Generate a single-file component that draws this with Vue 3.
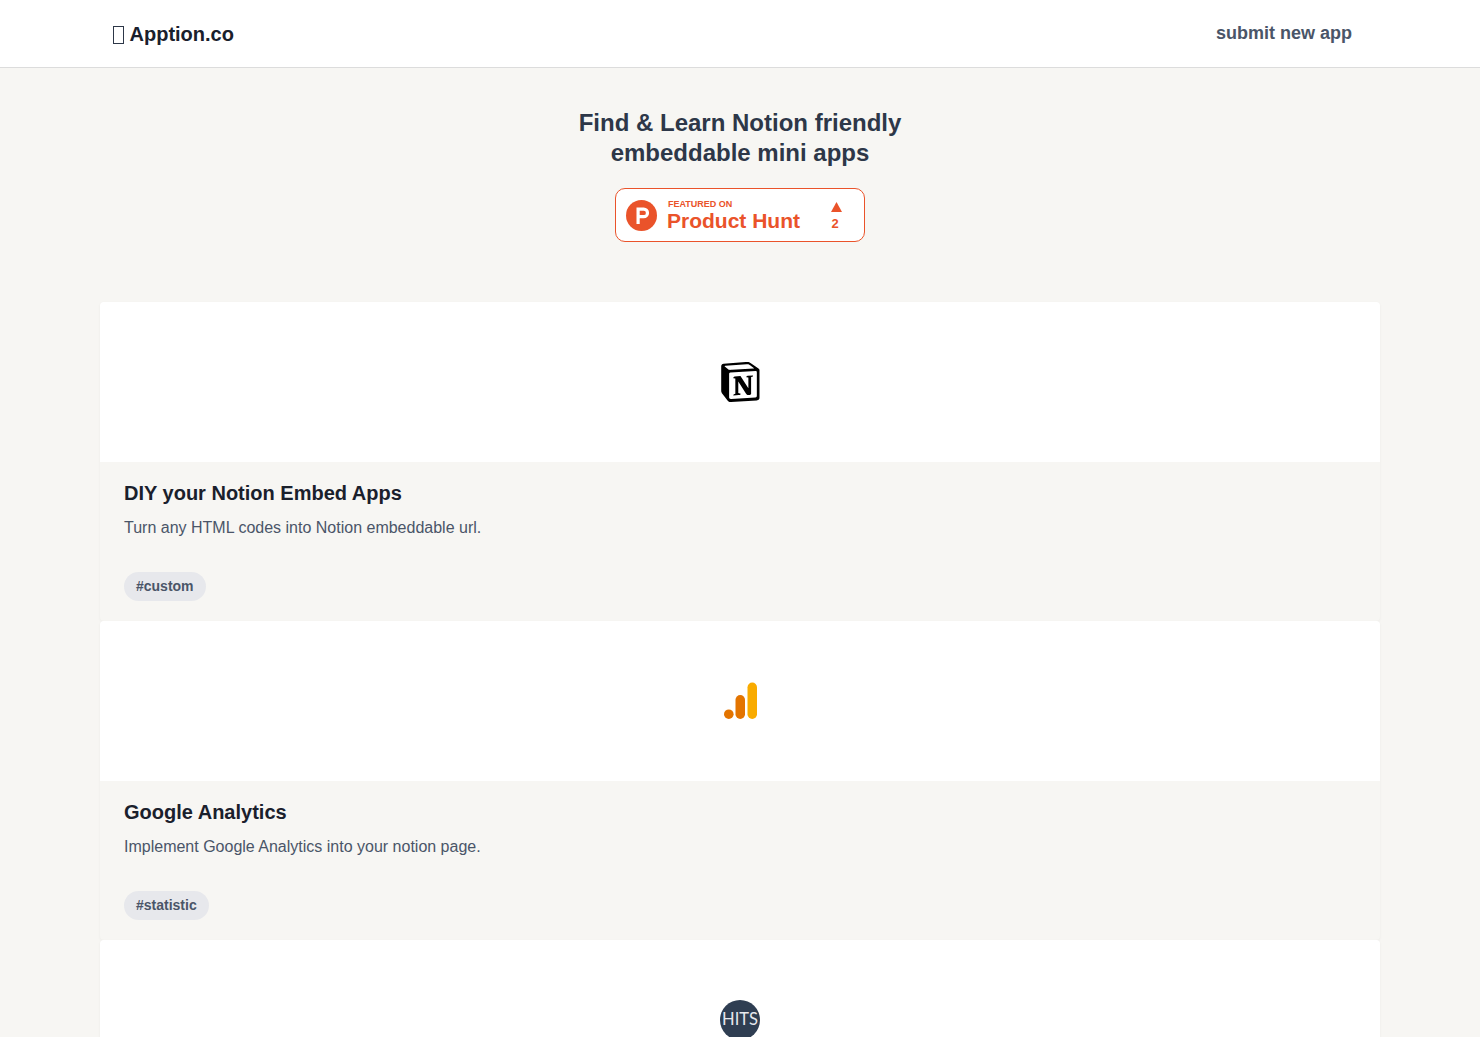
<script setup>
const apps = [
  { title: 'DIY your Notion Embed Apps', desc: 'Turn any HTML codes into Notion embeddable url.', tag: '#custom', icon: 'notion' },
  { title: 'Google Analytics', desc: 'Implement Google Analytics into your notion page.', tag: '#statistic', icon: 'ga' },
  { title: 'Hits', desc: 'Count the visitors of your notion page.', tag: '#statistic', icon: 'hits' },
]
</script>

<template>
  <div class="page">
    <header class="nav">
      <div class="nav-inner">
        <a class="brand"><span class="tofu"></span><span>Apption.co</span></a>
        <a class="submit">submit new app</a>
      </div>
    </header>
    <main class="main">
      <h1 class="hero">Find &amp; Learn Notion friendly<br />embeddable mini apps</h1>
      <div class="badge-wrap">
        <a class="badge">
          <span class="ph-logo">
            <svg width="31" height="31" viewBox="0 0 31 31">
              <circle cx="15.5" cy="15.5" r="15.5" fill="#ea532a" />
              <path fill="#fff" fill-rule="evenodd" d="M10.500 7.500h7.200a5.400 5.400 0 0 1 0 10.800H13.700V24h-3.200zM13.700 10.700v4.400h4a2.200 2.200 0 0 0 0-4.400z" />
            </svg>
          </span>
          <span class="ph-text">
            <span class="ph-small">FEATURED ON</span>
            <span class="ph-big">Product Hunt</span>
          </span>
          <span class="ph-vote">
            <svg width="11" height="10" viewBox="0 0 11 10"><path fill="#ea532a" d="M5.500 0L11 10H0z" /></svg>
            <span class="ph-num">2</span>
          </span>
        </a>
      </div>
      <section class="list">
        <article v-for="app in apps" :key="app.title" class="card">
          <div class="thumb">
            <svg v-if="app.icon === 'notion'" width="40" height="40" viewBox="-3 0 100 100">
              <path fill="#fff" d="M6.017 4.313l55.333 -4.087c6.797 -0.583 8.543 -0.19 12.817 2.917l17.663 12.443c2.913 2.14 3.883 2.723 3.883 5.053v68.243c0 4.277 -1.553 6.807 -6.99 7.193L24.467 99.967c-4.08 0.193 -6.023 -0.39 -8.16 -3.113L3.3 79.94c-2.333 -3.113 -3.3 -5.443 -3.3 -8.167V11.113c0 -3.497 1.553 -6.413 6.017 -6.8z" />
              <path fill="#000" fill-rule="evenodd" clip-rule="evenodd" d="M61.35 0.227l-55.333 4.087C1.553 4.7 0 7.617 0 11.113v60.66c0 2.723 0.967 5.053 3.3 8.167l13.007 16.913c2.137 2.723 4.08 3.307 8.16 3.113l64.257 -3.89c5.433 -0.387 6.99 -2.917 6.99 -7.193V20.64c0 -2.21 -0.873 -2.847 -3.443 -4.733L74.167 3.143c-4.273 -3.107 -6.02 -3.5 -12.817 -2.917zM25.92 19.523c-5.247 0.353 -6.437 0.433 -9.417 -1.99L8.927 11.507c-0.77 -0.78 -0.383 -1.753 1.557 -1.947l53.193 -3.887c4.467 -0.39 6.793 1.167 8.54 2.527l9.123 6.61c0.39 0.197 1.36 1.36 0.193 1.36l-54.933 3.307 -0.68 0.047zM19.803 88.3V30.367c0 -2.53 0.777 -3.697 3.103 -3.893L86 22.78c2.14 -0.193 3.107 1.167 3.107 3.693v57.547c0 2.53 -0.39 4.67 -3.883 4.863l-60.377 3.5c-3.493 0.193 -5.043 -0.97 -5.043 -4.083zm59.6 -54.827c0.387 1.75 0 3.5 -1.75 3.7l-2.91 0.577v42.773c-2.527 1.36 -4.853 2.137 -6.797 2.137 -3.107 0 -3.883 -0.973 -6.21 -3.887l-19.03 -29.94v28.967l6.02 1.363s0 3.5 -4.857 3.5l-13.39 0.777c-0.39 -0.78 0 -2.723 1.357 -3.11l3.497 -0.97v-38.3L30.48 40.667c-0.39 -1.75 0.58 -4.277 3.3 -4.473l14.367 -0.967 19.8 30.327v-26.83l-5.047 -0.58c-0.39 -2.143 1.163 -3.7 3.103 -3.89l13.4 -0.78z" />
            </svg>
            <svg v-else-if="app.icon === 'ga'" class="ga" width="40" height="40" viewBox="0 0 40 40">
              <rect x="27.500" y="1.500" width="9.500" height="36.500" rx="4.750" fill="#f9ab00" />
              <rect x="15.500" y="14" width="9.500" height="24" rx="4.750" fill="#e37400" />
              <circle cx="8.800" cy="33.200" r="4.800" fill="#e37400" />
            </svg>
            <span v-else class="hits">HITS</span>
          </div>
          <div class="body">
            <h2 class="title">{{ app.title }}</h2>
            <p class="desc">{{ app.desc }}</p>
            <span class="tag">{{ app.tag }}</span>
          </div>
        </article>
      </section>
    </main>
  </div>
</template>

<style>
html, body { margin: 0; background: #f7f6f3; }
</style>

<style scoped>
.page {
  min-height: 100vh;
  background: #f7f6f3;
  font-family: Arial, "Liberation Sans", sans-serif;
  color: #2d3748;
}
.nav {
  background: #fff;
  border-bottom: 1px solid #dcdcdc;
  height: 67px;
}
.nav-inner {
  width: 1280px;
  margin: 0 auto;
  padding: 0 28px 0 12px;
  box-sizing: border-box;
  height: 67px;
  display: flex;
  align-items: center;
  justify-content: space-between;
}
.brand {
  display: flex;
  align-items: center;
  font-size: 20px;
  font-weight: 700;
  line-height: 28px;
  color: #1a202c;
  margin-left: 1px;
}
.tofu {
  box-sizing: border-box;
  width: 11px;
  height: 18px;
  border: 1px solid #2d3748;
  margin-right: 5.500px;
  margin-top: 2px;
}
.submit {
  font-size: 18px;
  font-weight: 700;
  line-height: 26px;
  margin-top: -2px;
  color: #4a5568;
}
.main {
  width: 1280px;
  margin: 0 auto;
  padding-top: 40px;
}
.hero {
  margin: 0;
  text-align: center;
  font-size: 24px;
  line-height: 30px;
  font-weight: 700;
  color: #2d3748;
}
.badge-wrap {
  display: flex;
  justify-content: center;
  margin-top: 20px;
}
.badge {
  box-sizing: border-box;
  width: 250px;
  height: 54px;
  background: #fff;
  border: 1px solid #ea532a;
  border-radius: 10px;
  display: flex;
  align-items: center;
  padding-left: 10px;
  color: #ea532a;
}
.ph-logo { display: flex; width: 31px; height: 31px; }
.ph-text {
  display: flex;
  flex-direction: column;
  margin-left: 10px;
  width: 155px;
}
.ph-small {
  font-size: 9px;
  font-weight: 700;
  line-height: 10px;
  margin-left: 1px;
  margin-top: 2px;
}
.ph-big {
  font-size: 21px;
  font-weight: 700;
  line-height: 24px;
}
.ph-vote {
  display: flex;
  flex-direction: column;
  align-items: center;
  width: 11px;
  margin-left: 9px;
  margin-top: 2px;
}
.ph-num {
  font-size: 13px;
  font-weight: 700;
  line-height: 15px;
  margin-top: 4px;
  margin-right: 3px;
}
.list {
  margin-top: 60px;
  display: flex;
  flex-direction: column;
}
.card {
  border-radius: 4px;
  overflow: hidden;
  box-shadow: 0 1px 3px rgba(0, 0, 0, 0.05);
  background: #f7f6f3;
}
.thumb {
  height: 160px;
  background: #fff;
  display: flex;
  align-items: center;
  justify-content: center;
}
.ga { filter: blur(0.4px); }
.body {
  box-sizing: border-box;
  height: 159px;
  padding: 16px 24px 0;
}
.title {
  margin: 0;
  font-size: 20px;
  line-height: 30px;
  font-weight: 700;
  color: #1a202c;
}
.desc {
  margin: 8px 0 0;
  font-size: 16px;
  line-height: 24px;
  color: #4a5568;
}
.tag {
  display: inline-block;
  margin-top: 32px;
  padding: 0 12px;
  height: 29px;
  line-height: 29px;
  border-radius: 15px;
  background: #e7e8ec;
  font-size: 14px;
  font-weight: 700;
  color: #4a5568;
}
.hits {
  width: 40px;
  height: 40px;
  border-radius: 50%;
  background: #2f3e52;
  color: #e6e9ee;
  font-family: "Lato", sans-serif;
  font-size: 16.5px;
  line-height: 39px;
  display: flex;
  justify-content: center;
}
</style>
